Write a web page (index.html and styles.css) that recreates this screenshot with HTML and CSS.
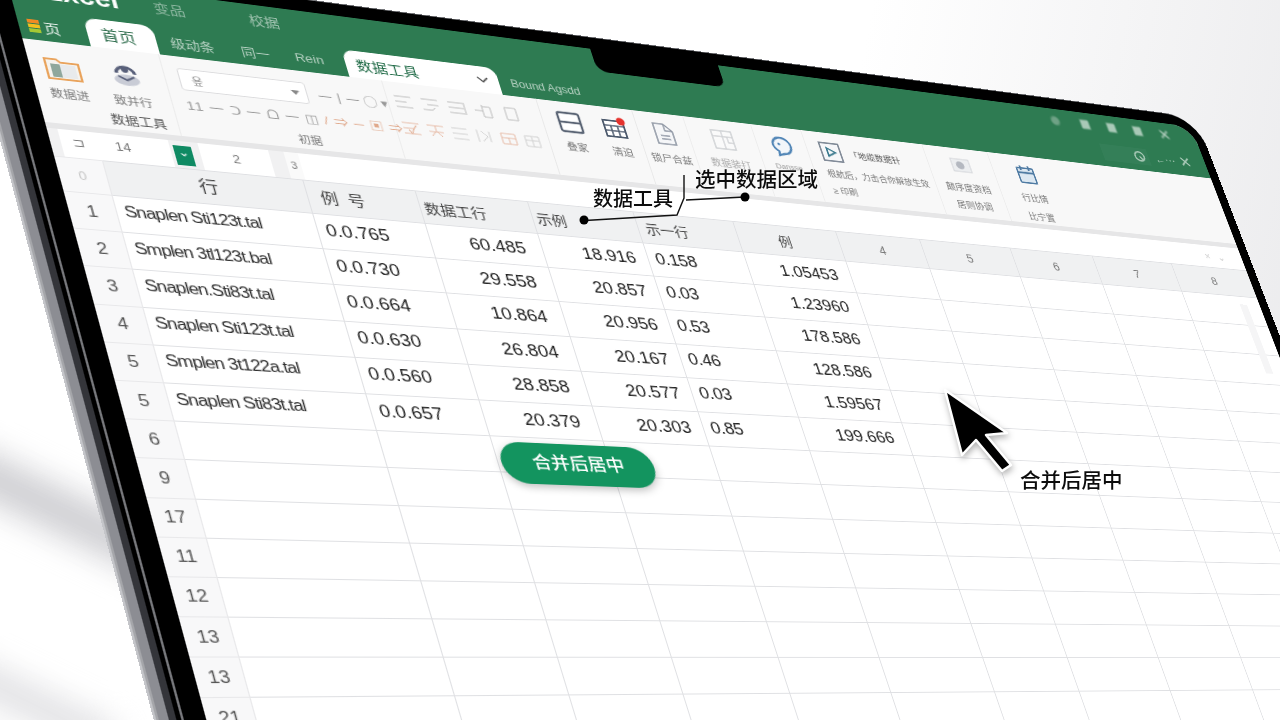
FILE: index.html
```html
<!DOCTYPE html>
<html>
<head>
    <title>数据工具</title>
    <link rel="stylesheet" href="styles.css">
</head>
<body>
    <div class="smudge smudge-one"></div>
    <div class="smudge smudge-two"></div>

    <div class="laptop">
        <div class="titlebar">
            <div class="title-row">
                <span class="brand">Excel</span>
                <span class="menu menu-one">变品</span>
                <span class="menu menu-two">校据</span>
                <div class="win-icons">
                    <i></i><i></i><i></i><i></i>
                    <svg width="14" height="14" viewBox="0 0 14 14"><path d="M2 2l10 10M12 2L2 12" stroke="#b9d2c4" stroke-width="2"/></svg>
                </div>
            </div>
            <div class="tab-row">
                <div class="home-menu"><span class="stack"><b></b><b></b><b></b></span><span>页</span></div>
                <div class="tab tab-home">首页</div>
                <span class="tab-text tab-a">级动条</span>
                <span class="tab-text tab-b">同一</span>
                <span class="tab-text tab-c">Rein</span>
                <div class="tab tab-tools">
                    <span>数据工具</span>
                    <svg width="12" height="8" viewBox="0 0 12 8"><path d="M1 1l5 5 5-5" fill="none" stroke="#444" stroke-width="1.5"/></svg>
                </div>
                <span class="tab-text tab-d">Bound Agsdd</span>
                <div class="tab-right">
                    <span class="search-pill"><svg width="16" height="16" viewBox="0 0 16 16"><circle cx="8" cy="8" r="6" fill="none" stroke="#a9c9b7" stroke-width="2"/><path d="M8 8l3 4" stroke="#a9c9b7" stroke-width="2"/></svg></span>
                    <span class="back-line">←⋯</span>
                    <svg width="12" height="12" viewBox="0 0 12 12"><path d="M1 1l10 10M11 1L1 11" stroke="#a9c9b7" stroke-width="2"/></svg>
                </div>
            </div>
        </div>

        <div class="ribbon">
            <div class="group g-a">
                <svg class="icon" width="32" height="26" viewBox="0 0 32 26"><path d="M2 3h10l3 3h15v18H2z" fill="#f6f3ee" stroke="#e9a35c" stroke-width="2"/><rect x="6" y="8" width="8" height="14" fill="#8fa79c"/><rect x="14" y="8" width="13" height="14" fill="#e8eaec"/></svg>
                <span class="label">数据进</span>
            </div>
            <div class="group g-b">
                <svg class="icon" width="28" height="26" viewBox="0 0 28 26"><ellipse cx="14" cy="17" rx="11" ry="6" fill="#c9ccd6"/><path d="M6 10a8 7 0 0 1 16 0" fill="none" stroke="#59607a" stroke-width="3"/><circle cx="14" cy="6" r="3" fill="#59607a"/><path d="M7 13l7 4 7-4" fill="none" stroke="#59607a" stroke-width="2"/></svg>
                <span class="label">致并行</span>
                <span class="label label-dark">数据工具</span>
            </div>
            <div class="group g-c">
                <div class="font-row">
                    <div class="combo"><span>욮</span><i></i></div>
                    <span class="glyphs">一丨一 ◯ ▾</span>
                </div>
                <div class="glyphs glyph-row">11 一 ᑐ 一 ᗝ 一 ◫ <em>/ ⇒ ─ ▣ ⇒ ✓</em></div>
                <span class="label group-name">初据</span>
            </div>
            <div class="group g-d">
                <div class="align-row">
                    <svg width="18" height="16" viewBox="0 0 18 16"><path d="M1 2h16M1 8h11M1 14h16" stroke="#bbb" fill="none"/></svg>
                    <svg width="18" height="16" viewBox="0 0 18 16"><path d="M1 2h16M6 8h11M1 14h9l3-3" stroke="#bbb" fill="none"/></svg>
                    <svg width="18" height="16" viewBox="0 0 18 16"><path d="M1 2h15M1 8h15M1 14h15M17 1v14" stroke="#bbb" fill="none"/></svg>
                    <svg width="18" height="16" viewBox="0 0 18 16"><path d="M1 8h8M9 1v14M9 3h8v12H9" stroke="#bbb" fill="none"/></svg>
                    <svg width="18" height="16" viewBox="0 0 18 16"><path d="M6 1v14h11V1z" stroke="#bbb" fill="none"/></svg>
                </div>
                <div class="align-row warm">
                    <svg width="18" height="16" viewBox="0 0 18 16"><path d="M1 2h16M1 8h11M1 14h16" stroke="#e6b9a4" fill="none"/></svg>
                    <svg width="18" height="16" viewBox="0 0 18 16"><path d="M1 2h16M9 2v7M2 9h14M4 14l4-5M14 14l-4-5" stroke="#e6b9a4" fill="none"/></svg>
                    <svg width="18" height="16" viewBox="0 0 18 16"><path d="M1 2h15M1 8h15M1 14h15" stroke="#cfcfcf" fill="none"/></svg>
                    <svg width="18" height="16" viewBox="0 0 18 16"><path d="M2 1v14M6 2l6 6-6 6M14 2v12" stroke="#cfcfcf" fill="none"/></svg>
                    <svg width="18" height="16" viewBox="0 0 18 16"><path d="M2 2h14v12H2zM2 7h14M9 7v7" stroke="#e6b9a4" fill="none"/></svg>
                    <svg width="18" height="16" viewBox="0 0 18 16"><path d="M2 2h14v12H2zM2 7h14M9 2v12" stroke="#cfcfcf" fill="none"/></svg>
                </div>
            </div>
            <div class="group big-pair">
                <div class="big">
                    <svg width="26" height="26" viewBox="0 0 26 26"><rect x="2" y="2" width="22" height="22" rx="2" fill="#fff" stroke="#5a6474" stroke-width="2.4"/><path d="M2 13h22" stroke="#5a6474" stroke-width="2.4"/></svg>
                    <span class="label">叠家</span>
                </div>
                <div class="big">
                    <svg width="26" height="26" viewBox="0 0 26 26"><rect x="2" y="5" width="21" height="19" fill="#fff" stroke="#4d5a6d" stroke-width="2"/><path d="M2 11h21M2 17h21M9 11v13M16 11v13" stroke="#4d5a6d" stroke-width="1.6"/><circle cx="21" cy="5" r="4.5" fill="#e5322d"/></svg>
                    <span class="label">清迫</span>
                </div>
            </div>
            <div class="group big-doc">
                <div class="big">
                    <svg width="26" height="28" viewBox="0 0 26 28"><path d="M4 2h11l8 8v16H4z" fill="#f5f6f8" stroke="#8b93a0" stroke-width="1.6"/><path d="M15 2v8h8M9 16h10M9 20h10" fill="none" stroke="#8b93a0" stroke-width="1.4"/></svg>
                    <span class="label">锁尸合兹</span>
                </div>
            </div>
            <div class="group big-fade">
                <div class="big">
                    <svg width="26" height="26" viewBox="0 0 26 26"><rect x="2" y="2" width="22" height="22" fill="#fafafa" stroke="#cfd1d4" stroke-width="1.6"/><path d="M2 9h22M13 2v22M18 9v7h6" fill="none" stroke="#cfd1d4" stroke-width="1.4"/></svg>
                    <span class="label label-faint">数据装打</span>
                </div>
            </div>
            <div class="group big-head">
                <div class="big">
                    <svg width="28" height="26" viewBox="0 0 28 26"><path d="M4 12a10 10 0 1 1 10 10l-6 2 1-5a10 10 0 0 1-5-7z" fill="#f2f6fa" stroke="#4f84b5" stroke-width="2.4"/><circle cx="11" cy="10" r="1.6" fill="#4f84b5"/></svg>
                    <span class="label label-tiny">Dansse</span>
                </div>
            </div>
            <div class="group text-block">
                <div class="play-row">
                    <svg width="26" height="26" viewBox="0 0 26 26"><rect x="2" y="2" width="22" height="22" fill="#f6f7f9" stroke="#76808e" stroke-width="1.8"/><path d="M9 8l9 5-9 5z" fill="none" stroke="#3b7a8e" stroke-width="2"/></svg>
                    <span class="label label-dark">「地缆数据针</span>
                </div>
                <span class="label">根航后，力击合你解放生效</span>
                <span class="label">≥ 印刷</span>
            </div>
            <div class="group big-grey">
                <div class="big">
                    <svg width="28" height="24" viewBox="0 0 28 24"><rect x="3" y="3" width="22" height="16" fill="#eceef0" stroke="#cfd1d6"/><circle cx="13" cy="11" r="5" fill="#b4b8c0"/></svg>
                    <span class="label">颠序度资档</span>
                    <span class="label">居则协调</span>
                </div>
            </div>
            <div class="group big-cal">
                <div class="big">
                    <svg width="26" height="26" viewBox="0 0 26 26"><rect x="3" y="5" width="20" height="19" rx="1" fill="#dce8f2" stroke="#4f7ba3" stroke-width="2"/><path d="M8 2v6M18 2v6M3 11h20" stroke="#4f7ba3" stroke-width="2.4"/></svg>
                    <span class="label">行比情</span>
                    <span class="label">比宁置</span>
                </div>
            </div>
        </div>

        <div class="formula-gap"></div>
        <div class="formula">
            <div class="name-box"><span>⊐</span><span>14</span></div>
            <div class="fx">⌄</div>
            <div class="cell-box">2</div>
            <div class="tiny-box">3</div>
            <div class="formula-fill"><span>×</span><span>⌄</span></div>
        </div>

        <table class="sheet">
            <colgroup>
                <col class="c-num"><col class="c-a"><col class="c-b"><col class="c-c"><col class="c-d"><col class="c-e">
                <col class="c-f"><col class="c-g"><col class="c-h"><col class="c-i"><col class="c-j"><col class="c-k">
            </colgroup>
            <tr class="head">
                <th class="num faint">0</th><th class="big-head-text">行</th><th class="left-14">例&nbsp;&nbsp;号</th><th class="left">数据工行</th><th class="left">示例</th><th class="left left-e">示一行</th>
                <th class="head-f">例</th><th class="grey">4</th><th class="grey">5</th><th class="grey">6</th><th class="grey">7</th><th class="grey">8</th>
            </tr>
            <tr><th class="num">1</th><td class="name">Snaplen Sti123t.tal</td><td class="val">0.0.765</td><td class="r r-c">60.485</td><td class="r r-d">18.916</td><td class="val val-e">0.158</td><td class="r r-f">1.05453</td><td></td><td></td><td></td><td></td><td></td></tr>
            <tr><th class="num">2</th><td class="name">Smplen 3tl123t.bal</td><td class="val">0.0.730</td><td class="r r-c">29.558</td><td class="r r-d">20.857</td><td class="val val-e">0.03</td><td class="r r-f">1.23960</td><td></td><td></td><td></td><td></td><td></td></tr>
            <tr><th class="num">3</th><td class="name">Snaplen.Sti83t.tal</td><td class="val">0.0.664</td><td class="r r-c">10.864</td><td class="r r-d">20.956</td><td class="val val-e">0.53</td><td class="r r-f">178.586</td><td></td><td></td><td></td><td></td><td></td></tr>
            <tr><th class="num">4</th><td class="name">Snaplen Sti123t.tal</td><td class="val">0.0.630</td><td class="r r-c">26.804</td><td class="r r-d">20.167</td><td class="val val-e">0.46</td><td class="r r-f">128.586</td><td></td><td></td><td></td><td></td><td></td></tr>
            <tr><th class="num">5</th><td class="name">Smplen 3t122a.tal</td><td class="val">0.0.560</td><td class="r r-c">28.858</td><td class="r r-d">20.577</td><td class="val val-e">0.03</td><td class="r r-f">1.59567</td><td></td><td></td><td></td><td></td><td></td></tr>
            <tr><th class="num">5</th><td class="name">Snaplen Sti83t.tal</td><td class="val">0.0.657</td><td class="r r-c">20.379</td><td class="r r-d">20.303</td><td class="val val-e">0.85</td><td class="r r-f">199.666</td><td></td><td></td><td></td><td></td><td></td></tr>
            <tr><th class="num">6</th><td></td><td></td><td></td><td></td><td></td><td></td><td></td><td></td><td></td><td></td><td></td></tr>
            <tr><th class="num">9</th><td></td><td></td><td></td><td></td><td></td><td></td><td></td><td></td><td></td><td></td><td></td></tr>
            <tr><th class="num">17</th><td></td><td></td><td></td><td></td><td></td><td></td><td></td><td></td><td></td><td></td><td></td></tr>
            <tr><th class="num">11</th><td></td><td></td><td></td><td></td><td></td><td></td><td></td><td></td><td></td><td></td><td></td></tr>
            <tr><th class="num">12</th><td></td><td></td><td></td><td></td><td></td><td></td><td></td><td></td><td></td><td></td><td></td></tr>
            <tr><th class="num">13</th><td></td><td></td><td></td><td></td><td></td><td></td><td></td><td></td><td></td><td></td><td></td></tr>
            <tr><th class="num">13</th><td></td><td></td><td></td><td></td><td></td><td></td><td></td><td></td><td></td><td></td><td></td></tr>
            <tr><th class="num">21</th><td></td><td></td><td></td><td></td><td></td><td></td><td></td><td></td><td></td><td></td><td></td></tr>
            <tr><th class="num"></th><td></td><td></td><td></td><td></td><td></td><td></td><td></td><td></td><td></td><td></td><td></td></tr>
        </table>

        <div class="scroll-thumb"></div>
        <div class="notch"></div>
        <div class="merge-pill">合并后居中</div>
    </div>

    <!-- callouts sit flat over the tilted screen -->
    <svg class="callouts" width="1280" height="720" viewBox="0 0 1280 720">
        <path d="M585 220.5L677 215L684 198V175" fill="none" stroke="#111" stroke-width="1.4"/>
        <path d="M686 200L745 197" fill="none" stroke="#111" stroke-width="1.4"/>
        <circle cx="584" cy="220" r="4.5" fill="#000"/>
        <circle cx="745" cy="197" r="4.5" fill="#000"/>
    </svg>
    <span class="note note-tools">数据工具</span>
    <span class="note note-select">选中数据区域</span>

    <svg class="cursor" width="90" height="100" viewBox="0 0 90 100">
        <path d="M6 3L68 46L47 48L72 78L63 84L37 53L23 68z" fill="#000" stroke="#fff" stroke-width="2.5" stroke-linejoin="round"/>
    </svg>
    <span class="note note-cursor">合并后居中</span>
</body>
</html>
```

FILE: styles.css
```css
* {
    box-sizing: border-box;
}

html, body {
    margin: 0;
    width: 1280px;
    height: 720px;
    overflow: hidden;
}

body {
    position: relative;
    font-family: "Liberation Sans", "Noto Sans CJK SC", sans-serif;
    background: linear-gradient(100deg, #fff 0%, #fff 62%, #eaeaec 100%);
    color: #222;
}

.smudge {
    position: absolute;
    background: #cdcdd1;
    filter: blur(16px);
    transform: rotate(26deg);
}

.smudge-one {
    left: -50px;
    top: 490px;
    width: 220px;
    height: 42px;
}

.smudge-two {
    left: -50px;
    top: 690px;
    width: 170px;
    height: 30px;
    background: #dddde0;
}

/* the screen is laid out flat, then tilted as one sheet */
.laptop {
    position: absolute;
    left: 0;
    top: 0;
    width: 1280px;
    height: 820px;
    overflow: hidden;
    background: #fff;
    border-radius: 0 26px 0 0;
    transform-origin: 0 0;
    transform: matrix3d(1.19594, 0.14912, 0, 0.00022591, 0.25088, 0.93339, 0, -0.00009455, 0, 0, 1, 0, 4.6, -27.4, 0, 1);
    box-shadow:
        -3px 1px 0 15px #000,
        -4px 1px 0 16px #77787c,
        -12px 8px 0 12px #000,
        -15px 8px 0 15px #34353a,
        -19px 9px 0 19px #8c8d93,
        -20px 9px 0 20px #a5a6aa,
        -21px 9px 0 21px #c4c5c9;
}

.titlebar {
    height: 70px;
    background: #2e7b52;
    color: #b6d1c2;
    font-size: 14px;
}

.title-row {
    display: flex;
    align-items: center;
    height: 39px;
    padding-left: 28px;
}

.brand {
    width: 64px;
    color: #fff;
    font-size: 25px;
    font-weight: bold;
    margin-top: -8px;
}

.menu {
    filter: blur(0.6px);
    opacity: 0.7;
    margin-top: -6px;
}

.menu-one {
    margin-left: 32px;
}

.menu-two {
    margin-left: 58px;
    opacity: 0.85;
}

.win-icons {
    display: flex;
    align-items: center;
    gap: 24px;
    margin-left: auto;
    padding-right: 36px;
    margin-top: -8px;
    filter: blur(0.8px);
}

.win-icons i {
    display: block;
    width: 11px;
    height: 12px;
    background: #a9c9b7;
}

.win-icons i:first-child {
    border-radius: 50%;
    background: #6fa286;
    margin-right: 4px;
}

.tab-row {
    display: flex;
    align-items: center;
    height: 31px;
}

.home-menu {
    display: flex;
    align-items: center;
    gap: 3px;
    width: 30px;
    margin-left: 8px;
    color: #e8f1ec;
    font-size: 14px;
}

.stack {
    display: flex;
    flex-direction: column;
    gap: 1px;
}

.stack b {
    display: block;
    width: 10px;
    height: 4px;
    background: #f08a24;
}

.stack b:nth-child(2) {
    background: #f3c01e;
}

.stack b:nth-child(3) {
    background: #a6c834;
}

.tab {
    display: flex;
    align-items: center;
    height: 31px;
    background: #fff;
    border-radius: 11px 11px 0 0;
}

.tab-home {
    justify-content: center;
    width: 60px;
    margin-left: 20px;
    padding-right: 6px;
    color: #2b6b4a;
    font-size: 15px;
}

.tab-tools {
    justify-content: space-between;
    width: 150px;
    margin-left: 18px;
    padding: 0 10px 0 10px;
    color: #1f6a46;
    font-size: 15px;
}

.tab-text {
    filter: blur(0.6px);
    text-align: center;
    font-size: 13px;
}

.tab-a {
    width: 44px;
    margin-left: 10px;
}

.tab-b {
    width: 32px;
    margin-left: 19px;
}

.tab-c {
    width: 32px;
    margin-left: 18px;
}

.tab-d {
    width: 84px;
    margin-left: 6px;
    font-size: 12px;
    white-space: nowrap;
}

.tab-right {
    display: flex;
    align-items: center;
    gap: 8px;
    margin-left: auto;
    padding-right: 22px;
    margin-top: -8px;
    filter: blur(0.7px);
}

.search-pill {
    display: flex;
    justify-content: flex-end;
    width: 62px;
    padding: 3px 4px;
    background: #347f58;
}

.back-line {
    color: #a9c9b7;
}

.ribbon {
    display: flex;
    height: 88px;
    background: #f8f8f8;
    color: #666;
    font-size: 11px;
}

.group {
    position: relative;
    display: flex;
    flex-direction: column;
    filter: blur(0.6px);
}

.label {
    color: #777;
    white-space: nowrap;
}

.label-dark {
    color: #555;
}

.label-faint {
    color: #aaa;
}

.label-tiny {
    color: #999;
    font-size: 9px;
}

.g-a, .g-b {
    align-items: center;
    padding-top: 16px;
    gap: 5px;
}

.g-a {
    width: 56px;
}

.g-b {
    width: 52px;
    margin-right: 8px;
}

.g-b .label-dark {
    font-size: 12px;
}

.g-c {
    width: 206px;
    padding: 13px 0 0 12px;
    border-left: 1px solid #ececec;
    border-right: 1px solid #ececec;
    color: #999;
}

.font-row {
    display: flex;
    align-items: center;
    gap: 10px;
}

.combo {
    display: flex;
    justify-content: space-between;
    align-items: center;
    width: 117px;
    height: 24px;
    padding: 0 6px 0 10px;
    background: #fff;
    border: 1px solid #dcdcde;
    border-radius: 3px;
}

.combo i {
    width: 0;
    height: 0;
    border-left: 4px solid transparent;
    border-right: 4px solid transparent;
    border-top: 5px solid #888;
}

.glyphs {
    color: #999;
    font-size: 13px;
    white-space: nowrap;
}

.glyph-row {
    margin-top: 6px;
    letter-spacing: 1px;
}

.glyph-row em {
    color: #e0a98c;
    font-style: normal;
}

.group-name {
    align-self: center;
    margin: 7px 0 0 20px;
}

.g-d {
    width: 153px;
    padding: 14px 0 0 6px;
    gap: 14px;
    border-right: 1px solid #e8e8e8;
}

.align-row {
    display: flex;
    gap: 8px;
}

.align-row.warm {
    gap: 6px;
}

.big {
    display: flex;
    flex-direction: column;
    align-items: center;
    gap: 7px;
    padding-top: 11px;
}

.big .label + .label {
    margin-top: -1px;
}

.big-pair {
    flex-direction: row;
    width: 100px;
    padding-left: 4px;
    border-right: 1px solid #e8e8e8;
}

.big-pair .big {
    width: 48px;
}

.big-doc {
    width: 55px;
    border-right: 1px solid #ececec;
}

.big-fade {
    width: 75px;
    border-right: 1px solid #ececec;
}

.big-head {
    width: 57px;
    border-right: 1px solid #ececec;
}

.big-doc .big, .big-fade .big, .big-head .big, .big-grey .big, .big-cal .big {
    width: 100%;
}

.text-block {
    width: 143px;
    padding: 11px 0 0 14px;
    gap: 6px;
    border-right: 1px solid #ececec;
    font-size: 10px;
}

.play-row {
    display: flex;
    align-items: center;
    gap: 8px;
}

.big-grey {
    width: 80px;
    border-right: 1px solid #ececec;
}

.big-cal {
    width: 82px;
}

.big-cal .big {
    gap: 9px;
}

.formula-gap {
    height: 6px;
    background: #e6e6e7;
}

.formula {
    display: flex;
    height: 29px;
    background: #f1f1f2;
    color: #777;
    font-size: 12px;
    filter: blur(0.35px);
}

.name-box {
    display: flex;
    gap: 26px;
    width: 94px;
    margin-left: 9px;
    padding: 6px 0 0 10px;
    background: #fff;
}

.fx {
    width: 16px;
    height: 21px;
    margin: 5px 0 0 3px;
    background: #0f8a63;
    color: #fff;
    text-align: center;
}

.cell-box {
    width: 63px;
    margin-left: 7px;
    padding-top: 7px;
    background: #fff;
    text-align: center;
}

.tiny-box {
    width: 13px;
    margin-left: 14px;
    padding-top: 9px;
    background: #fafafa;
    font-size: 10px;
    text-align: center;
}

.formula-fill {
    display: flex;
    flex: 1;
    justify-content: flex-end;
    gap: 10px;
    padding: 8px 24px 0 0;
    background: #fff;
    color: #ccc;
}

.sheet {
    width: 1280px;
    table-layout: fixed;
    border-collapse: collapse;
}

.c-num { width: 40px; }
.c-a { width: 176px; }
.c-b { width: 105px; }
.c-c { width: 110px; }
.c-d { width: 108px; }
.c-e { width: 107px; }
.c-f { width: 115px; }
.c-g { width: 98px; }
.c-h { width: 110px; }
.c-i { width: 104px; }
.c-j { width: 104px; }
.c-k { width: 103px; }

.sheet tr {
    height: 38.2px;
}

.sheet tr.head {
    height: 36px;
}

th, td {
    padding: 0;
    border: 1px solid #dfe0e3;
    font-weight: normal;
    white-space: nowrap;
}

.head th {
    background: #f0f1f2;
    color: #444;
    font-size: 15px;
}

.head .big-head-text {
    padding-bottom: 4px;
    font-size: 17px;
}

.head .left {
    padding-left: 4px;
    text-align: left;
}

.head .left-e {
    padding-left: 8px;
}

.head .head-f {
    padding-right: 10px;
}

.head .left-14 {
    padding: 0 0 4px 12px;
    text-align: left;
    font-size: 16px;
}

.head .grey {
    color: #777;
    font-size: 14px;
    filter: blur(0.3px);
}

.num, .head .num {
    background: #f8f8f9;
    color: #555;
    font-size: 16px;
    text-align: center;
    border-left: none;
    border-color: #e8e8ea;
    filter: blur(0.25px);
}

.head .num.faint {
    color: #c4c4c4;
    font-size: 12px;
}

.name {
    padding: 0 0 6px 7px;
    color: #2e2e2e;
    font-size: 16px;
    letter-spacing: -0.8px;
}

.val {
    padding: 0 0 3px 8px;
    color: #222;
    font-size: 17.5px;
}

.val-e {
    font-size: 18px;
    letter-spacing: -0.3px;
}

.r {
    color: #222;
    font-size: 18px;
    text-align: right;
}

.r-c {
    padding-right: 16px;
}

.r-d {
    padding-right: 12px;
}

.r-f {
    padding-right: 14px;
}

.scroll-thumb {
    position: absolute;
    right: 18px;
    top: 240px;
    width: 10px;
    height: 90px;
    background: #f5f5f6;
}

.notch {
    position: absolute;
    left: 551px;
    top: 0;
    width: 139px;
    height: 27px;
    background: #000;
    border-radius: 0 0 10px 12px;
}

.merge-pill {
    position: absolute;
    left: 325px;
    top: 464px;
    width: 150px;
    height: 44px;
    background: #13945f;
    border-radius: 22px;
    color: #fff;
    font-size: 18px;
    font-weight: 500;
    line-height: 42px;
    text-align: center;
    box-shadow: 0 3px 8px rgba(0, 0, 0, 0.25);
}

.callouts {
    position: absolute;
    left: 0;
    top: 0;
}

.note {
    position: absolute;
    color: #0c0c0c;
    font-size: 20px;
    font-weight: 500;
    line-height: 24px;
    white-space: nowrap;
}

.note-tools {
    left: 593px;
    top: 187px;
}

.note-select {
    left: 695px;
    top: 168px;
    font-size: 20.5px;
}

.note-cursor {
    left: 1020px;
    top: 469px;
    font-size: 20.5px;
}

.cursor {
    position: absolute;
    left: 939px;
    top: 387px;
    filter: drop-shadow(1px 3px 3px rgba(0, 0, 0, 0.3));
}
```
